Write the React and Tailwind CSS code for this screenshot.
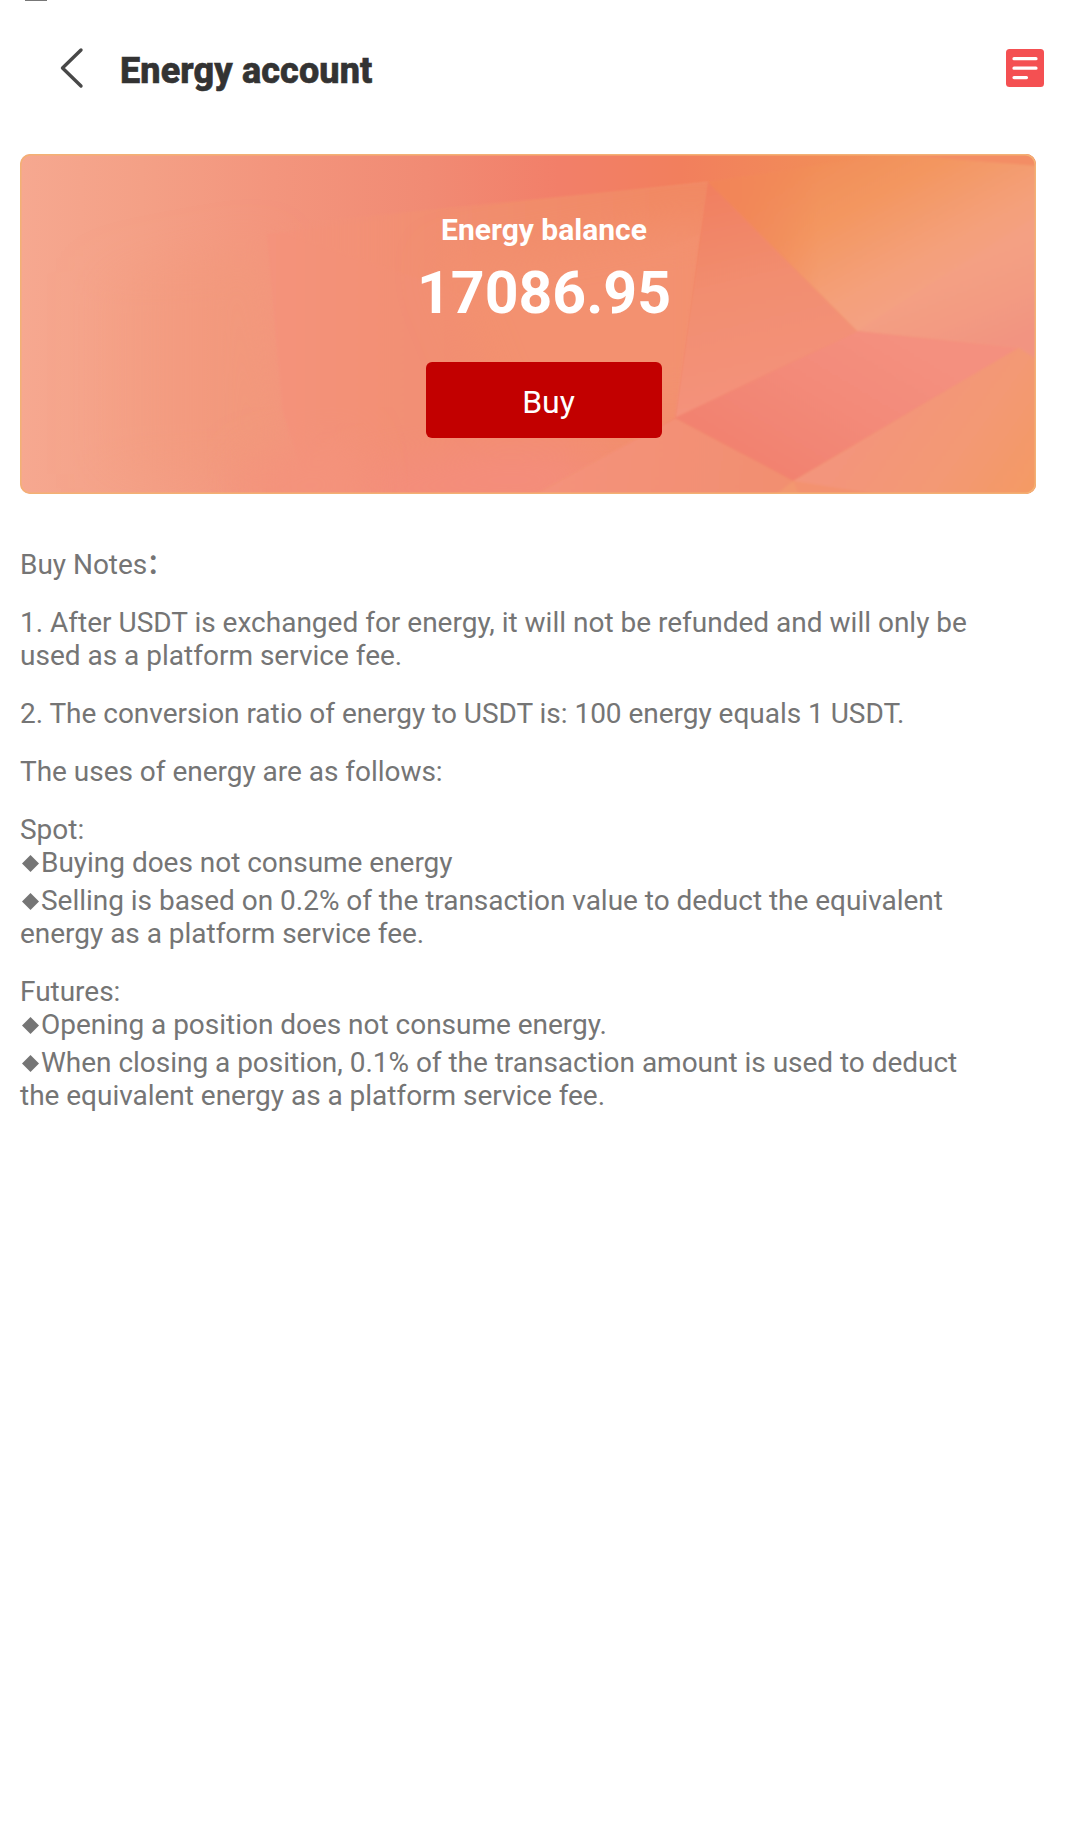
import React from "react";

function CardArt() {
  return (
    <svg className="absolute inset-0 h-full w-full" viewBox="0 0 1016 340" preserveAspectRatio="none" aria-hidden="true">
      <defs>
        <filter id="soft" x="-30%" y="-30%" width="160%" height="160%"><feGaussianBlur stdDeviation="22" /></filter>
        <filter id="edge"><feGaussianBlur stdDeviation="1" /></filter>
        <linearGradient id="base" x1="0" y1="0" x2="1" y2="0">
          <stop offset="0" stopColor="#f6a890" />
          <stop offset="0.12" stopColor="#f4a086" />
          <stop offset="0.25" stopColor="#f3957d" />
          <stop offset="0.4" stopColor="#f18b74" />
          <stop offset="0.53" stopColor="#f27f69" />
          <stop offset="0.65" stopColor="#f27f5d" />
          <stop offset="0.8" stopColor="#f28d58" />
          <stop offset="1" stopColor="#f49a66" />
        </linearGradient>
        <linearGradient id="lower" gradientUnits="userSpaceOnUse" x1="250" y1="0" x2="660" y2="0">
          <stop offset="0" stopColor="#f4937b" />
          <stop offset="0.5" stopColor="#f28e71" />
          <stop offset="1" stopColor="#f38f6c" />
        </linearGradient>
        <linearGradient id="upper" gradientUnits="userSpaceOnUse" x1="250" y1="0" x2="660" y2="0">
          <stop offset="0" stopColor="#f4957c" stopOpacity="0" />
          <stop offset="0.35" stopColor="#f28f72" />
          <stop offset="1" stopColor="#f18963" />
        </linearGradient>
        <linearGradient id="mid" gradientUnits="userSpaceOnUse" x1="690" y1="30" x2="740" y2="240">
          <stop offset="0" stopColor="#f17f60" />
          <stop offset="0.5" stopColor="#f28e70" />
          <stop offset="1" stopColor="#f4927b" />
        </linearGradient>
        <linearGradient id="sky" gradientUnits="userSpaceOnUse" x1="820" y1="-10" x2="900" y2="140">
          <stop offset="0" stopColor="#f28d58" />
          <stop offset="0.35" stopColor="#f3965f" />
          <stop offset="0.8" stopColor="#f4a07a" />
          <stop offset="1" stopColor="#f4a182" />
        </linearGradient>
        <linearGradient id="skyLeft" gradientUnits="userSpaceOnUse" x1="690" y1="0" x2="800" y2="0">
          <stop offset="0" stopColor="#f28459" />
          <stop offset="1" stopColor="#f28459" stopOpacity="0" />
        </linearGradient>
        <linearGradient id="dusk" gradientUnits="userSpaceOnUse" x1="925" y1="115" x2="960" y2="200">
          <stop offset="0" stopColor="#f4a084" stopOpacity="0.6" />
          <stop offset="1" stopColor="#f29481" />
        </linearGradient>
        <linearGradient id="rose" gradientUnits="userSpaceOnUse" x1="860" y1="175" x2="770" y2="325">
          <stop offset="0" stopColor="#f4907f" />
          <stop offset="0.5" stopColor="#f38a79" />
          <stop offset="1" stopColor="#f28270" />
        </linearGradient>
        <linearGradient id="corner" gradientUnits="userSpaceOnUse" x1="870" y1="240" x2="1010" y2="340">
          <stop offset="0" stopColor="#f3957b" />
          <stop offset="0.5" stopColor="#f39975" />
          <stop offset="1" stopColor="#f49a64" />
        </linearGradient>
        <linearGradient id="floor" gradientUnits="userSpaceOnUse" x1="540" y1="300" x2="780" y2="340">
          <stop offset="0" stopColor="#f4927b" />
          <stop offset="1" stopColor="#f28f70" />
        </linearGradient>
        <linearGradient id="leftWarm" gradientUnits="userSpaceOnUse" x1="60" y1="0" x2="262" y2="0">
          <stop offset="0" stopColor="#f39b7c" stopOpacity="0" />
          <stop offset="1" stopColor="#f2987b" />
        </linearGradient>
        <clipPath id="lowerClip"><path d="M247 72L688 28 655 264 515 340H276L262 256Z" /></clipPath>
      </defs>
      <rect width="1016" height="340" fill="url(#base)" />
      <path d="M60 120L247 93 262 256 276 320H60Z" fill="url(#leftWarm)" filter="url(#soft)" />
      <path d="M247 80L688 28 655 264 515 345H290L262 256Z" fill="url(#lower)" filter="url(#edge)" />
      <path d="M247 72L688 28 680 80 500 160 276 83Z" fill="url(#upper)" filter="url(#edge)" />
      <g clipPath="url(#lowerClip)">
        <path d="M420 110L700 60V260H480Z" fill="#f39170" filter="url(#soft)" />
        <path d="M330 320L480 290 600 300 540 360H330Z" fill="#f48d7b" filter="url(#soft)" />
      </g>
      <path d="M225 310L330 280 350 370H225Z" fill="#f4937c" filter="url(#soft)" />
      <g filter="url(#edge)">
        <path d="M688 28L780 14 900 -4H1020V208L999 194 837 177Z" fill="url(#sky)" />
        <path d="M688 28L780 14 900 -4 837 177Z" fill="url(#skyLeft)" />
        <path d="M837 177L1020 60V208L999 194Z" fill="url(#dusk)" />
        <path d="M880 1L1020 -4V12Z" fill="#f38d65" />
        <path d="M688 28L837 177 655 264 668 170Z" fill="url(#mid)" />
        <path d="M837 177L999 194 773 327 655 264Z" fill="url(#rose)" />
        <path d="M999 194L1020 208V345H780L773 327Z" fill="url(#corner)" />
        <path d="M655 264L773 327 780 345H506Z" fill="url(#floor)" />
        <path d="M773 327L870 342H780Z" fill="#f3926f" />
        <path d="M773 327L780 342H754Z" fill="#f39870" />
      </g>
      <rect x="0.75" y="0.75" width="1014.5" height="338.5" rx="10" fill="none" stroke="#f3b174" strokeWidth="1.5" />
    </svg>
  );
}

function Header() {
  return (
    <header className="flex h-[152px] items-start pt-[46px]">
      <svg className="ml-[58px] h-[44px] w-[28px]" viewBox="0 0 28 44" fill="none" stroke="#484848" strokeWidth="3.4" strokeLinecap="round" strokeLinejoin="round" aria-hidden="true">
        <path d="M23 4L4.5 22 23 40" />
      </svg>
      <h1 className="ml-[34px] mt-[4px] text-[36px] leading-[42px] font-extrabold tracking-[0.12px] text-[#333333] [-webkit-text-stroke:0.6px_#333333]">Energy account</h1>
      <svg className="ml-auto mr-[36px] mt-[3px] h-[38px] w-[38px]" viewBox="0 0 38 38" fill="none" aria-hidden="true">
        <rect width="38" height="38" rx="3.5" fill="#f45052" />
        <path d="M8 9.7H30M8 19.2H30M8 28.6H20.5" stroke="#fff" strokeWidth="3.2" strokeLinecap="round" />
      </svg>
    </header>
  );
}

function Bullet({ children }) {
  return (
    <p>
      <span className="inline-block w-[21px]">
        <svg className="ml-[2px] h-[17px] w-[17px]" viewBox="0 0 17 17" aria-hidden="true">
          <path d="M8.5 0L17 8.5 8.5 17 0 8.5Z" fill="#757575" />
        </svg>
      </span>
      {children}
    </p>
  );
}

export default function App() {
  return (
    <main className="relative h-[1848px] w-[1080px] overflow-hidden bg-white font-['Roboto',sans-serif]">
      <div className="absolute left-[25px] top-0 h-px w-[22px] bg-[#777777]" />
      <Header />
      <section className="relative ml-[20px] mt-[2px] h-[340px] w-[1016px] overflow-hidden rounded-[10px]">
        <CardArt />
        <div className="relative ml-[32px] flex flex-col items-center pt-[58px] text-white">
          <h2 className="text-[30px] leading-[36px] font-bold">Energy balance</h2>
          <p className="mt-[10px] text-[59px] leading-[70px] font-bold">17086.95</p>
          <button className="mt-[34px] h-[76px] w-[236px] rounded-[6px] bg-[#c20000] pl-[9px] pt-[3px] text-[32px] leading-[36px]">Buy</button>
        </div>
      </section>
      <section className="ml-[20px] mt-[54px] w-[1000px] whitespace-nowrap text-[28px] leading-[33px] tracking-[-0.025px] text-[#757575]">
        <p className="h-[33px]">Buy Notes<span className="-ml-px font-['Noto_Sans_CJK_SC',sans-serif] font-medium leading-[20px]">：</span></p>
        <p className="mt-[25px] tracking-normal">1. After USDT is exchanged for energy, it will not be refunded and will only be<br />used as a platform service fee.</p>
        <p className="mt-[25px]">2. The conversion ratio of energy to USDT is: 100 energy equals 1 USDT.</p>
        <p className="mt-[25px]">The uses of energy are as follows:</p>
        <div className="mt-[25px]">
          <p>Spot:</p>
          <Bullet>Buying does not consume energy</Bullet>
          <div className="h-[5px]" />
          <Bullet>Selling is based on 0.2% of the transaction value to deduct the equivalent<br />energy as a platform service fee.</Bullet>
        </div>
        <div className="mt-[25px]">
          <p>Futures:</p>
          <Bullet>Opening a position does not consume energy.</Bullet>
          <div className="h-[5px]" />
          <Bullet>When closing a position, 0.1% of the transaction amount is used to deduct<br />the equivalent energy as a platform service fee.</Bullet>
        </div>
      </section>
    </main>
  );
}
